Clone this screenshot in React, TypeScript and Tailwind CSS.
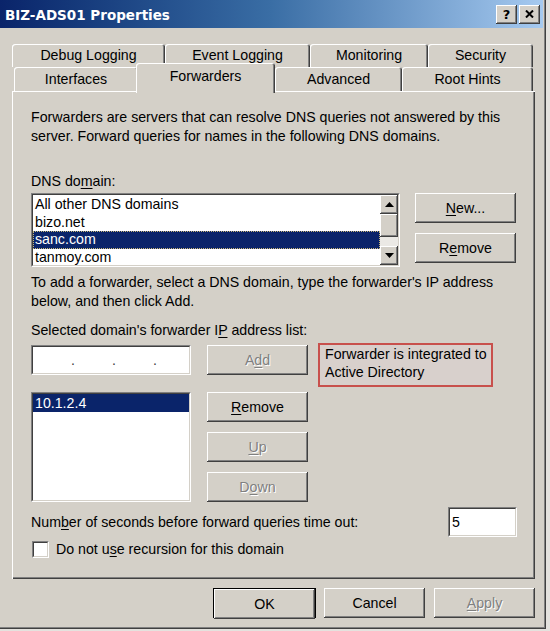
import React from "react";

const SUNK_OUT = "border border-t-[#808080] border-l-[#808080] border-r-white border-b-white";
const SUNK_IN = "border border-t-[#404040] border-l-[#404040] border-r-[#d4d0c8] border-b-[#d4d0c8]";
const RAISED = "shadow-[inset_-1px_-1px_#404040,inset_1px_1px_#ffffff,inset_-2px_-2px_#808080]";
const DISABLED = "text-[#808080] [text-shadow:1px_1px_0_#ffffff]";
const TAB = "flex items-center justify-center rounded-t-[3px] bg-[#d4d0c8] shadow-[inset_1px_1px_#ffffff,inset_-1px_0_#404040,inset_-2px_0_#808080]";

function Sunken({ className, children }: { className: string; children?: React.ReactNode }) {
  return (
    <div className={`${SUNK_OUT} ${className}`}>
      <div className={`${SUNK_IN} h-full w-full overflow-hidden bg-white`}>{children}</div>
    </div>
  );
}

function Button({
  children,
  className = "",
  disabled = false,
}: {
  children: React.ReactNode;
  className?: string;
  disabled?: boolean;
}) {
  return (
    <div
      className={`flex h-[30px] w-[101px] shrink-0 items-center justify-center bg-[#d4d0c8] ${RAISED} ${
        disabled ? DISABLED : "text-black"
      } ${className}`}
    >
      <span>{children}</span>
    </div>
  );
}

function U({ children }: { children: React.ReactNode }) {
  return <span className="underline decoration-1 underline-offset-[2px]">{children}</span>;
}

function ArrowUp() {
  return (
    <svg width="9" height="5" viewBox="0 0 9 5">
      <path d="M4.5 0 L9 5 L0 5 Z" fill="#000" />
    </svg>
  );
}

function ArrowDown() {
  return (
    <svg width="9" height="5" viewBox="0 0 9 5">
      <path d="M0 0 L9 0 L4.5 5 Z" fill="#000" />
    </svg>
  );
}

export default function App() {
  return (
    <div className="h-[631px] w-[550px] overflow-hidden bg-[#e4e2de] font-['Liberation_Sans',Arial,sans-serif] text-[14.2px] leading-[19px] text-black">
      <div className="flex h-[629px] w-[546px] flex-col bg-[#d4d0c8] shadow-[inset_-1px_-1px_#404040,inset_-2px_-2px_#808080]">
        {/* Title bar */}
        <div className="flex h-[28px] w-[543px] shrink-0 items-center bg-linear-to-r from-[#0a246a] via-[#3a6ea5] to-[#a6caf0] pl-[5px] pr-[3px]">
          <span className="flex-1 pt-[2px] font-['DejaVu_Sans',sans-serif] text-[13.5px] font-bold text-white">
            BIZ-ADS01 Properties
          </span>
          <div className="flex gap-[2px]">
            <div className={`flex h-[19px] w-[21px] items-center justify-center bg-[#d4d0c8] ${RAISED}`}>
              <span className="font-['DejaVu_Sans',sans-serif] text-[13px] font-bold leading-none">?</span>
            </div>
            <div className={`flex h-[19px] w-[21px] items-center justify-center bg-[#d4d0c8] ${RAISED}`}>
              <svg width="9" height="8" viewBox="0 0 9 8">
                <path d="M1 0.5 L8 7.5 M8 0.5 L1 7.5" stroke="#000" strokeWidth="2" />
              </svg>
            </div>
          </div>
        </div>

        {/* Tabs */}
        <div className="flex flex-col pl-[12px] pt-[16px]">
          <div className="flex h-[23px]">
            <div className={`${TAB} w-[153px]`}>Debug Logging</div>
            <div className={`${TAB} w-[145px]`}>Event Logging</div>
            <div className={`${TAB} w-[118px]`}>Monitoring</div>
            <div className={`${TAB} w-[105px]`}>Security</div>
          </div>
          <div className="flex h-[24px] items-end">
            <div className={`${TAB} ml-[2px] h-[24px] w-[124px] pt-[1px]`}>Interfaces</div>
            <div
              className={`relative z-10 -mb-[2px] -ml-[2px] flex h-[30px] w-[139px] justify-center rounded-t-[3px] bg-[#d4d0c8] pt-[4px] shadow-[inset_1px_1px_#ffffff,inset_-1px_0_#404040,inset_-2px_0_#808080]`}
            >
              Forwarders
            </div>
            <div className={`${TAB} h-[24px] w-[127px] pt-[1px]`}>Advanced</div>
            <div className={`${TAB} h-[24px] w-[131px] pt-[1px]`}>Root Hints</div>
          </div>
        </div>

        {/* Panel */}
        <div className="ml-[12px] flex h-[488px] w-[523px] shrink-0 flex-col bg-[#d4d0c8] pl-[19px] pt-[17px] shadow-[inset_1px_1px_#ffffff,inset_-1px_-1px_#404040,inset_-2px_-2px_#808080]">
          <p>
            Forwarders are servers that can resolve DNS queries not answered by this
            <br />
            server. Forward queries for names in the following DNS domains.
          </p>

          <div className="mt-[26px]">
            DNS do<U>m</U>ain:
          </div>

          <div className="mt-[2px] flex">
            <Sunken className="h-[74px] w-[369px]">
              <div className="flex h-full">
                <div className="flex flex-1 flex-col pt-[1px] leading-[17.5px]">
                  <div className="h-[17.5px] pl-[2px]">All other DNS domains</div>
                  <div className="h-[17.5px] pl-[2px]">bizo.net</div>
                  <div className="h-[17.5px] border border-dotted border-[#c8b878] bg-[#0a246a] pl-[1px] leading-[15.5px] text-white">
                    sanc.com
                  </div>
                  <div className="h-[17.5px] pl-[2px]">tanmoy.com</div>
                </div>
                <div className="flex w-[18px] flex-col">
                  <div className={`flex h-[19px] items-center justify-center bg-[#d4d0c8] ${RAISED}`}>
                    <ArrowUp />
                  </div>
                  <div className={`h-[23px] bg-[#d4d0c8] ${RAISED}`} />
                  <div className="flex-1 bg-[#ebe9e5]" />
                  <div className={`flex h-[19px] items-center justify-center bg-[#d4d0c8] ${RAISED}`}>
                    <ArrowDown />
                  </div>
                </div>
              </div>
            </Sunken>
            <div className="ml-[15px] flex flex-col gap-[10px]">
              <Button>
                <U>N</U>ew...
              </Button>
              <Button>
                R<U>e</U>move
              </Button>
            </div>
          </div>

          <p className="mt-[6px]">
            To add a forwarder, select a DNS domain, type the forwarder's IP address
            <br />
            below, and then click Add.
          </p>

          <div className="mt-[10px]">
            Selected domain's forwarder I<U>P</U> address list:
          </div>

          <div className="mt-[5px] flex items-start">
            <div className="flex w-[160px] flex-col">
              <Sunken className="h-[30px] w-[160px]">
                <div className="flex h-full items-center text-[#404040]">
                  <span className="w-[38px]" />
                  <span>.</span>
                  <span className="w-[37px]" />
                  <span>.</span>
                  <span className="w-[37px]" />
                  <span>.</span>
                </div>
              </Sunken>
              <Sunken className="mt-[17px] h-[110px] w-[160px]">
                <div className="h-[18px] bg-[#0a246a] pl-[2px] leading-[18px] text-white">10.1.2.4</div>
              </Sunken>
            </div>
            <div className="ml-[16px] flex flex-col">
              <Button disabled>
                A<U>d</U>d
              </Button>
              <Button className="mt-[17px]">
                <U>R</U>emove
              </Button>
              <Button className="mt-[10px]" disabled>
                <U>U</U>p
              </Button>
              <Button className="mt-[10px]" disabled>
                D<U>o</U>wn
              </Button>
            </div>
            <div className="-mt-[2px] ml-[10px] h-[44px] w-[175px] border-2 border-[#c8504c] bg-[#d8d0cc] pl-[5px] leading-[18px]">
              Forwarder is integrated to
              <br />
              Active Directory
            </div>
          </div>

          <div className="mt-[5px] flex h-[30px] w-[486px] items-center justify-between">
            <span>
              Num<U>b</U>er of seconds before forward queries time out:
            </span>
            <Sunken className="h-[30px] w-[69px]">
              <div className="flex h-full items-center pl-[2px]">5</div>
            </Sunken>
          </div>

          <div className="mt-[3px] flex h-[19px] items-center">
            <Sunken className="ml-[1px] h-[17px] w-[17px]" />
            <span className="ml-[7px]">
              Do not u<U>s</U>e recursion for this domain
            </span>
          </div>
        </div>

        {/* Footer */}
        <div className="mt-[9px] flex w-[535px] justify-end">
          <div className="h-[30px] w-[103px] border border-black">
            <Button className="h-[28px] w-[101px]">OK</Button>
          </div>
          <Button className="ml-[8px]">Cancel</Button>
          <Button className="ml-[9px]" disabled>
            <U>A</U>pply
          </Button>
        </div>
      </div>
    </div>
  );
}
